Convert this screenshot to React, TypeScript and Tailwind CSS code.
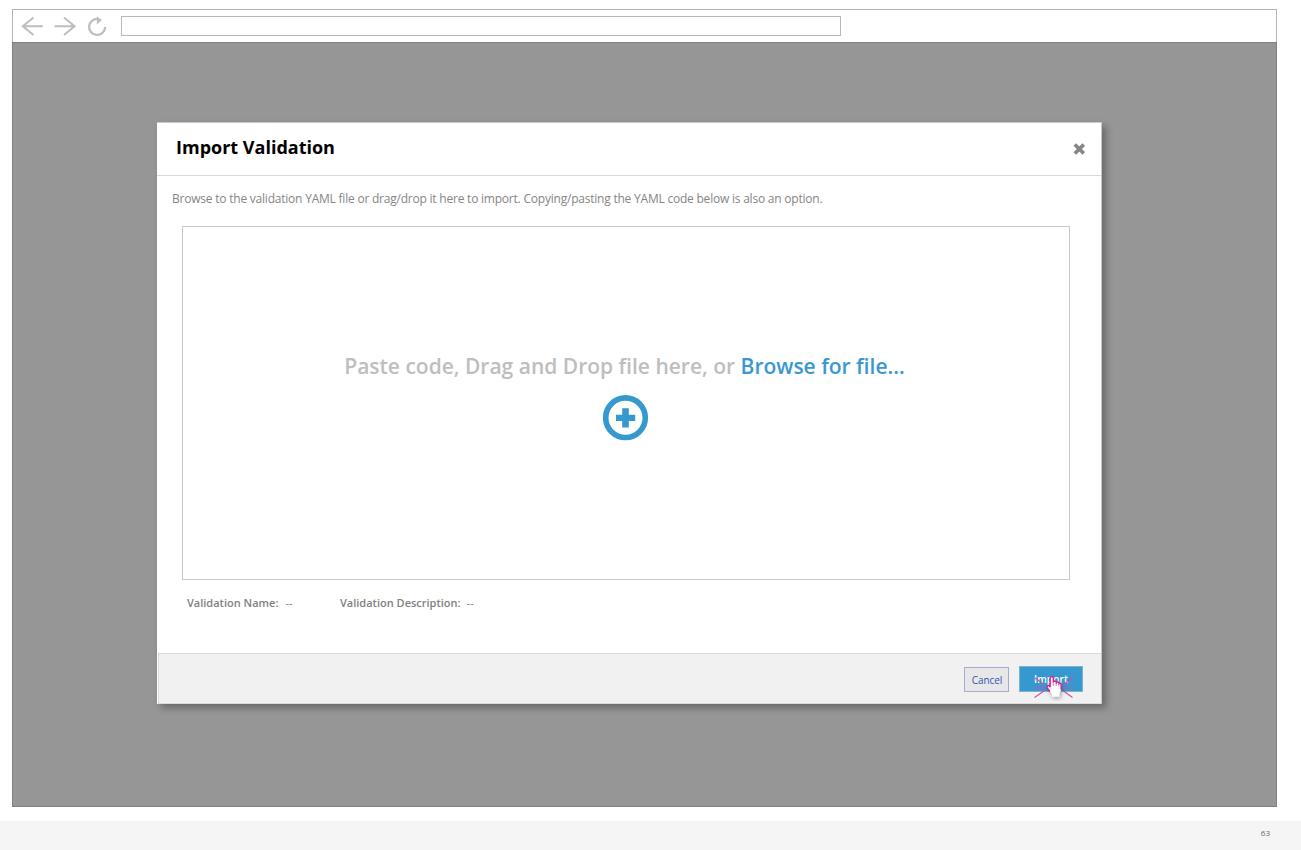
function BrowserBar() {
  return (
    <div className="flex h-[33px] items-center border border-b-0 border-[#b3b3b3] bg-white pl-[8px]">
      <svg className="h-[32px] w-[100px] shrink-0" viewBox="21 10 100 32" fill="none" stroke="#bdbebe" strokeWidth="2">
        <path d="M22.5 26.3H42.8M33.5 17.5L22.8 26.3L33.5 35" />
        <path d="M54.5 26.3H74.8M64 17.5L74.6 26.3L64 35" />
        <path d="M98 19A8 8 0 1 0 105.1 27" strokeWidth="2.3" />
        <path d="M96.8 16.2L102 20L96.8 24.4Z" fill="#bdbebe" stroke="none" />
      </svg>
      <div className="h-[20px] w-[720px] border border-[#b8b8b8] bg-white" />
    </div>
  );
}

function ClickCursor() {
  return (
    <svg className="absolute left-[13px] top-[6px] h-[28px] w-[42px]" viewBox="1033 673 42 28" fill="none">
      <path d="M1035 678L1044 684.5M1072.5 678L1063.5 684.5M1034 688H1044M1063.5 688H1073M1034.5 697.5L1044 691M1072.5 697.5L1063.5 691" stroke="#dc4c9b" strokeWidth="1.1" />
      <g className="drop-shadow-[1px_2px_2px_rgba(0,0,0,0.3)]">
        <path
          d="M1050.2 687V678.2Q1050.2 676.6 1051.7 676.6Q1053.3 676.6 1053.3 678.2V682.2Q1053.9 681 1055.1 681.2Q1056.2 681.5 1056.3 682.7Q1057 681.7 1058.1 682.1Q1059 682.4 1059 683.6Q1059.7 683 1060.6 683.5Q1061.2 684 1061.1 685.2V689.8Q1061 691.5 1059.5 693.3V696.8H1052V694L1047.3 688.2Q1046.6 686.4 1047.8 685.6Q1048.9 685.2 1050.2 687Z"
          fill="white"
        />
      </g>
      <path d="M1050.2 687.3V678.2Q1050.2 676.6 1051.7 676.6Q1053.3 676.6 1053.3 678.2V682.2Q1053.9 681 1055.1 681.2Q1056.2 681.5 1056.3 682.7Q1057 681.7 1058.1 682.1Q1059 682.4 1059 683.6Q1059.7 683 1060.6 683.5Q1061.2 684 1061.1 685.2V689.5M1050.2 687Q1048.9 685.2 1047.8 685.6Q1046.6 686.4 1047.3 688.2L1050 691.5" stroke="#e6148c" strokeWidth="1.3" />
      <path d="M1053.3 682V686M1056.2 683V686M1058.9 684V686.5" stroke="#e6148c" strokeWidth="0.6" />
    </svg>
  );
}

function ImportDialog() {
  return (
    <div className="ml-[145px] mt-[80px] flex h-[582px] w-[945px] flex-col border-r border-t border-[#c8c8c8] bg-white shadow-[4px_4px_7px_0px_rgba(0,0,0,0.3)]">
      <header className="flex h-[53px] shrink-0 items-center justify-between border-b border-[#d9d9d9] pl-[19px] pr-[16px]">
        <h1 className="-mt-[4px] text-[18px] leading-[24px] font-bold text-black">Import Validation</h1>
        <svg className="-mt-px h-[12px] w-[12px]" viewBox="0 0 12 12" stroke="#858688" strokeWidth="3.7">
          <path d="M1.8 1.5L10.8 10.5M10.8 1.5L1.8 10.5" />
        </svg>
      </header>
      <p className="mt-[14px] pl-[15px] text-[12px] leading-[18px] tracking-[-0.218px] whitespace-nowrap text-[#858585]">
        Browse to the validation YAML file or drag/drop it here to import. Copying/pasting the YAML code below is also an option.
      </p>
      <div className="ml-[25px] mt-[18px] flex h-[354px] w-[888px] shrink-0 flex-col items-center border border-[#c9c9c9] pt-[124px]">
        <p className="-ml-[3px] text-[21px] leading-[30px] font-semibold whitespace-nowrap text-[#bebebe]">
          Paste code, Drag and Drop file here, or <span className="text-[#3898cf]">Browse for file...</span>
        </p>
        <svg className="mt-[14px] h-[46px] w-[46px]" viewBox="0 0 46 46">
          <circle cx="22.5" cy="22.7" r="19.8" fill="none" stroke="#3598ce" strokeWidth="5.6" />
          <path d="M19.2 13.2H25.8V19.7H32.2V26H25.8V32.4H19.2V26H13V19.7H19.2Z" fill="#3598ce" />
        </svg>
      </div>
      <div className="ml-[30px] mt-[15px] flex text-[11px] leading-[16px] text-[#818181]">
        <div className="w-[153px]"><span className="font-semibold">Validation Name:</span><span className="ml-[7px]">--</span></div>
        <div><span className="font-semibold">Validation Description:</span><span className="ml-[6px]">--</span></div>
      </div>
      <footer className="ml-px mt-auto flex h-[51px] shrink-0 items-start justify-end border border-r-0 border-[#dadada] bg-[#f1f1f1] pr-[18px] pt-[13px]">
        <button className="mr-[10px] h-[25px] w-[45px] border border-[#a4add0] bg-[#e7e7e9] pl-px text-[10px] leading-[22px] tracking-[-0.1px] text-[#3454aa]">Cancel</button>
        <button className="relative -mt-px h-[26px] w-[64px] border border-[#7eb0d0] bg-[#3598ce] text-[10px] leading-[24px] font-semibold tracking-[0.15px] text-white">
          Import
          <ClickCursor />
        </button>
      </footer>
    </div>
  );
}

export default function App() {
  return (
    <div className="flex h-[850px] w-[1301px] flex-col overflow-hidden bg-white font-['Open_Sans',sans-serif]">
      <main className="ml-[12px] mt-[9px] flex h-[798px] w-[1265px] shrink-0 flex-col">
        <BrowserBar />
        <div className="flex-1 border border-[#808080] bg-[#969696] pt-px">
          <div className="-ml-px -mt-[2px]"><div className="flex"><ImportDialog /></div></div>
        </div>
      </main>
      <div className="mt-[14px] flex flex-1 justify-end bg-[#f5f5f5] pr-[31px] pt-[6px] text-[8px] leading-[12px] text-[#666666]">63</div>
    </div>
  );
}
